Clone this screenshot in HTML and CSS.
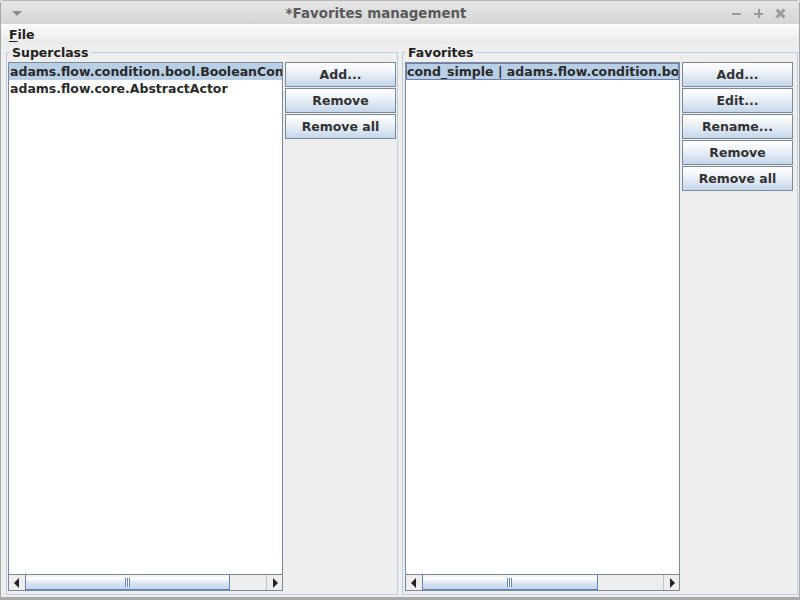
FILE: index.html
```html
<!DOCTYPE html>
<html>
<head>
<meta charset="utf-8">
<title>Favorites management</title>
<link rel="stylesheet" href="styles.css">
</head>
<body>
<div class="window">
  <div class="titlebar">
    <span class="tb-menu"></span>
    <span class="tb-title">*Favorites management</span>
    <span class="tb-controls">
      <span class="tb-btn tb-min"></span>
      <span class="tb-btn tb-max"></span>
      <span class="tb-btn tb-close"></span>
    </span>
  </div>
  <div class="menubar"><span class="menu-item"><u>F</u>ile</span></div>
  <div class="content">
    <div class="panel panel-left">
      <span class="panel-title">Superclass</span>
      <div class="panel-body">
        <div class="list">
          <div class="list-items">
            <div class="row selected">adams.flow.condition.bool.BooleanCondition</div>
            <div class="row">adams.flow.core.AbstractActor</div>
          </div>
          <div class="hscroll">
            <span class="arrow arrow-left"></span>
            <div class="track">
              <div class="thumb" style="width:85%"><span class="grip"></span></div>
            </div>
            <span class="arrow arrow-right"></span>
          </div>
        </div>
        <div class="buttons">
          <button class="btn">Add...</button>
          <button class="btn">Remove</button>
          <button class="btn">Remove all</button>
        </div>
      </div>
    </div>
    <div class="panel panel-right">
      <span class="panel-title">Favorites</span>
      <div class="panel-body">
        <div class="list">
          <div class="list-items">
            <div class="row selected focused">cond_simple | adams.flow.condition.bool.BooleanCondition</div>
          </div>
          <div class="hscroll">
            <span class="arrow arrow-left"></span>
            <div class="track">
              <div class="thumb" style="width:73%"><span class="grip"></span></div>
            </div>
            <span class="arrow arrow-right"></span>
          </div>
        </div>
        <div class="buttons">
          <button class="btn">Add...</button>
          <button class="btn">Edit...</button>
          <button class="btn">Rename...</button>
          <button class="btn">Remove</button>
          <button class="btn">Remove all</button>
        </div>
      </div>
    </div>
  </div>
</div>
</body>
</html>
```
FILE: styles.css
```css
* { box-sizing: border-box; }
html, body {
  margin: 0;
  padding: 0;
  width: 800px;
  height: 600px;
  overflow: hidden;
  background: #eeeeee;
  font-family: "DejaVu Sans", "Liberation Sans", sans-serif;
}
.window {
  width: 800px;
  height: 600px;
  display: flex;
  flex-direction: column;
  border-left: 1px solid #a6a6a6;
  border-right: 1px solid #a6a6a6;
  border-bottom: 3px solid #a9a9a9;
  border-radius: 4px 4px 0 0;
  background: #eeeeee;
  overflow: hidden;
}
.titlebar {
  height: 24px;
  flex: 0 0 24px;
  display: flex;
  align-items: center;
  background: linear-gradient(#e6e6e6, #d6d6d6);
  border-top: 1px solid #b8b8b8;
  padding-top: 1px;
}
.tb-menu {
  width: 0; height: 0;
  margin-left: 11px;
  border-left: 5px solid transparent;
  border-right: 5px solid transparent;
  border-top: 5px solid #8c8c8c;
}
.tb-title {
  flex: 1;
  text-align: center;
  font-weight: bold;
  font-size: 13.4px;
  color: #5a5a5a;
}
.tb-controls {
  display: flex;
  gap: 9px;
  margin-right: 12px;
}
.tb-btn {
  width: 13px;
  height: 13px;
  position: relative;
}
.tb-min::before {
  content: "";
  position: absolute;
  left: 2px; right: 2px; top: 6px;
  height: 2px;
  background: #9a9a9a;
}
.tb-max::before, .tb-max::after,
.tb-close::before, .tb-close::after {
  content: "";
  position: absolute;
  background: #9a9a9a;
}
.tb-max::before { left: 2px; right: 2px; top: 6px; height: 2px; }
.tb-max::after { top: 2px; bottom: 2px; left: 6px; width: 2px; }
.tb-close::before { left: 1px; right: 1px; top: 5px; height: 3px; transform: rotate(45deg); }
.tb-close::after { left: 1px; right: 1px; top: 5px; height: 3px; transform: rotate(-45deg); }

.menubar {
  height: 20px;
  flex: 0 0 20px;
  background: linear-gradient(#fbfbfb, #e9e9e9);
  display: flex;
  align-items: center;
  padding-left: 8px;
}
.menu-item {
  font-weight: bold;
  font-size: 12.5px;
  color: #222;
}
.menu-item u { text-decoration-thickness: 1px; text-underline-offset: 2px; }

.content {
  flex: 1;
  display: flex;
  gap: 4px;
  padding: 8px 1px 2px 5px;
  min-height: 0;
}
.panel {
  position: relative;
  border: 1px solid #b8cfe5;
  display: flex;
  min-height: 0;
}
.panel-left { width: 392px; padding: 9px 1px 3px 1px; }
.panel-right { width: 396px; padding: 9px 4px 3px 2px; }
.panel-title {
  position: absolute;
  top: -8px;
  left: 3px;
  padding: 0 2px;
  background: #eeeeee;
  font-weight: bold;
  font-size: 12.5px;
  line-height: 15px;
  color: #222;
}
.panel-body {
  flex: 1;
  display: flex;
  gap: 2px;
  min-width: 0;
}
.list {
  flex: 1;
  min-width: 0;
  display: flex;
  flex-direction: column;
  border: 1px solid #7a8a99;
  background: #ffffff;
}
.list-items {
  flex: 1;
  overflow: hidden;
}
.row {
  height: 17px;
  line-height: 17px;
  padding-left: 1px;
  white-space: nowrap;
  overflow: hidden;
  font-weight: bold;
  font-size: 12.5px;
  color: #2a2a2a;
}
.row.selected { background: #b8cfe5; }
.row.focused { border: 1px solid #6b82b0; line-height: 15px; padding-left: 0; }

.hscroll {
  height: 16px;
  flex: 0 0 16px;
  display: flex;
  background: #eeeeee;
  border-top: 1px solid #7a8a99;
}
.arrow {
  width: 16px;
  flex: 0 0 16px;
  position: relative;
  background: #eeeeee;
}
.arrow::after {
  content: "";
  position: absolute;
  top: 3px;
  width: 0; height: 0;
  border-top: 5px solid transparent;
  border-bottom: 5px solid transparent;
}
.arrow-left::after { left: 5px; border-right: 5px solid #222; }
.arrow-right { border-left: 1px solid #b8c4cf; }
.arrow-right::after { left: 6px; border-left: 5px solid #222; }
.track {
  flex: 1;
  display: flex;
  background: #eeeeee;
}
.thumb {
  height: 100%;
  border: 1px solid #6382bf;
  border-top: 0;
  background: linear-gradient(#e9f0f8, #ffffff 25%, #dce7f3 55%, #c2d5ea);
  display: flex;
  align-items: center;
  justify-content: center;
}
.grip {
  width: 5px;
  height: 9px;
  background: repeating-linear-gradient(90deg, #6382bf 0 1px, #ffffff 1px 2px);
}

.buttons {
  width: 111px;
  flex: 0 0 111px;
  display: flex;
  flex-direction: column;
  gap: 1px;
}
.btn {
  height: 25px;
  margin: 0;
  padding: 0;
  border: 1px solid #7a8a99;
  background: linear-gradient(#ffffff, #f2f6fb 30%, #dce7f3 65%, #c4d6ea);
  font-family: "DejaVu Sans", "Liberation Sans", sans-serif;
  font-weight: bold;
  font-size: 12.5px;
  color: #333333;
  text-align: center;
}
```
